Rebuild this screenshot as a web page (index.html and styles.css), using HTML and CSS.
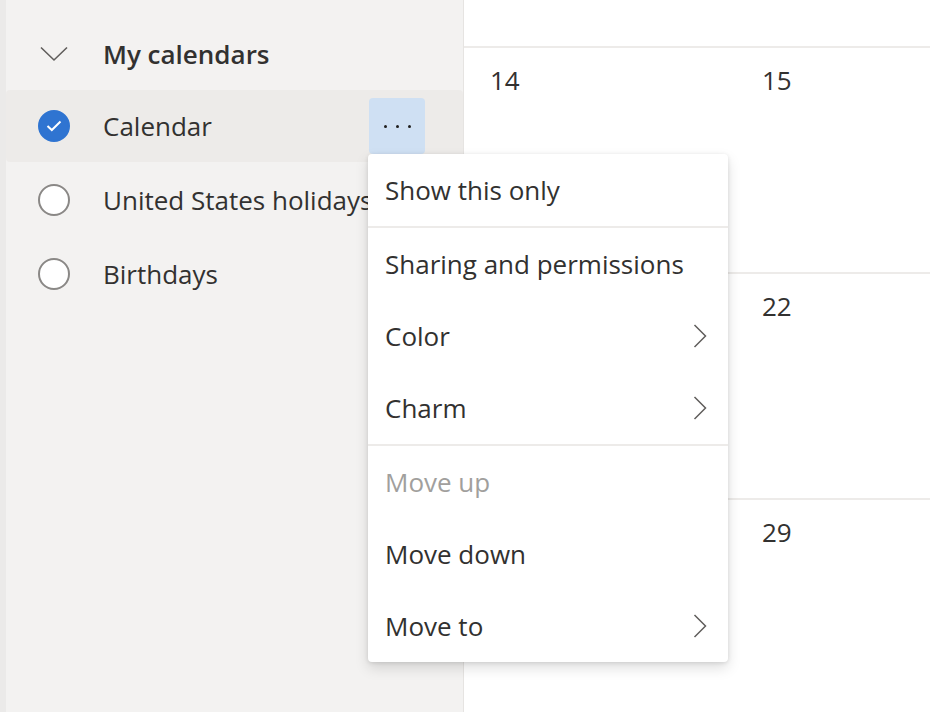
FILE: index.html
```
<!DOCTYPE html>
<html lang="en">
<head>
    <meta charset="UTF-8">
    <meta name="viewport" content="width=device-width, initial-scale=1.0">
    <title>Calendar</title>
    <link rel="stylesheet" href="styles.css">
</head>
<body>
    <div class="app">
        <aside class="sidebar">
            <div class="group-header">
                <span class="chevron-down">
                    <svg width="28" height="16" viewBox="0 0 28 16"><path d="M1 1.5 L14 14 L27 1.5" fill="none" stroke="#605e5c" stroke-width="1.6"/></svg>
                </span>
                <span class="group-title">My calendars</span>
            </div>
            <ul class="cal-list">
                <li class="cal-item selected">
                    <span class="check checked">
                        <svg width="16" height="12" viewBox="0 0 16 12"><path d="M1.5 6 L5.8 10 L14.5 1.5" fill="none" stroke="#fff" stroke-width="2"/></svg>
                    </span>
                    <span class="cal-name">Calendar</span>
                    <button class="more-btn"><span></span><span></span><span></span></button>
                </li>
                <li class="cal-item">
                    <span class="check"></span>
                    <span class="cal-name">United States holidays</span>
                </li>
                <li class="cal-item">
                    <span class="check"></span>
                    <span class="cal-name">Birthdays</span>
                </li>
            </ul>
        </aside>

        <main class="month">
            <div class="month-head"></div>
            <div class="week">
                <div class="day">14</div>
                <div class="day">15</div>
            </div>
            <div class="week">
                <div class="day"></div>
                <div class="day">22</div>
            </div>
            <div class="week">
                <div class="day"></div>
                <div class="day">29</div>
            </div>
        </main>

        <!-- context menu for the selected calendar -->
        <div class="menu">
            <div class="menu-item">Show this only</div>
            <div class="menu-sep"></div>
            <div class="menu-item">Sharing and permissions</div>
            <div class="menu-item">Color <svg class="arrow" width="14" height="24" viewBox="0 0 14 24"><path d="M1.5 1 L12.5 12 L1.5 23" fill="none" stroke="#605e5c" stroke-width="1.5"/></svg></div>
            <div class="menu-item">Charm <svg class="arrow" width="14" height="24" viewBox="0 0 14 24"><path d="M1.5 1 L12.5 12 L1.5 23" fill="none" stroke="#605e5c" stroke-width="1.5"/></svg></div>
            <div class="menu-sep"></div>
            <div class="menu-item disabled">Move up</div>
            <div class="menu-item">Move down</div>
            <div class="menu-item">Move to <svg class="arrow" width="14" height="24" viewBox="0 0 14 24"><path d="M1.5 1 L12.5 12 L1.5 23" fill="none" stroke="#605e5c" stroke-width="1.5"/></svg></div>
        </div>
    </div>
</body>
</html>
```

FILE: styles.css
```
body {
    margin: 0;
    font-family: "Open Sans", "Noto Sans", sans-serif;
    color: #323130;
    background-color: #fff;
}

.app {
    position: relative;
    display: flex;
    height: 712px;
    overflow: hidden;
}

.sidebar {
    width: 457px;
    flex-shrink: 0;
    background-color: #f3f2f1;
    border-left: 6px solid #ebeae9;
    border-right: 1px solid #e6e4e2;
    padding-top: 18px;
    box-sizing: content-box;
}

.group-header {
    display: flex;
    align-items: center;
    height: 72px;
}

.chevron-down {
    display: flex;
    width: 28px;
    margin-left: 34px;
    margin-right: 35px;
}

.group-title {
    font-size: 26px;
    font-weight: 600;
}

.cal-list {
    list-style: none;
    margin: 0;
    padding: 0;
}

.cal-item {
    display: flex;
    align-items: center;
    height: 72px;
    margin-bottom: 2px;
    padding-left: 32px;
    border-radius: 4px;
    white-space: nowrap;
}

.cal-item.selected {
    background-color: #edebe9;
}

.check {
    width: 28px;
    height: 28px;
    border: 2px solid #8a8886;
    border-radius: 50%;
    background-color: #fff;
    flex-shrink: 0;
    display: flex;
    align-items: center;
    justify-content: center;
}

.check.checked {
    border-color: #2f74d1;
    background-color: #2f74d1;
}

.cal-name {
    margin-left: 33px;
    font-size: 26px;
}

.more-btn {
    margin-left: auto;
    margin-right: 38px;
    width: 56px;
    height: 56px;
    border: none;
    border-radius: 4px;
    background-color: #cfe0f3;
    display: flex;
    align-items: center;
    justify-content: center;
    gap: 9px;
    padding: 0;
}

.more-btn span {
    width: 3px;
    height: 3px;
    border-radius: 50%;
    background-color: #201f1e;
}

.month {
    flex: 1;
}

.month-head {
    height: 46px;
}

.week {
    display: grid;
    grid-template-columns: 272px 272px;
    height: 224px;
    border-top: 2px solid #edebe9;
}

.day {
    padding: 14px 0 0 26px;
    font-size: 26px;
}

.menu {
    position: absolute;
    left: 368px;
    top: 154px;
    width: 360px;
    background-color: #fff;
    border-radius: 4px;
    box-shadow: 0 6px 14px rgba(0, 0, 0, 0.13), 0 1px 4px rgba(0, 0, 0, 0.11);
}

.menu-item {
    display: flex;
    align-items: center;
    justify-content: space-between;
    height: 72px;
    padding: 0 21px 0 17px;
    font-size: 26px;
}

.menu-item.disabled {
    color: #a19f9d;
}

.menu-sep {
    height: 2px;
    background-color: #edebe9;
}
```
